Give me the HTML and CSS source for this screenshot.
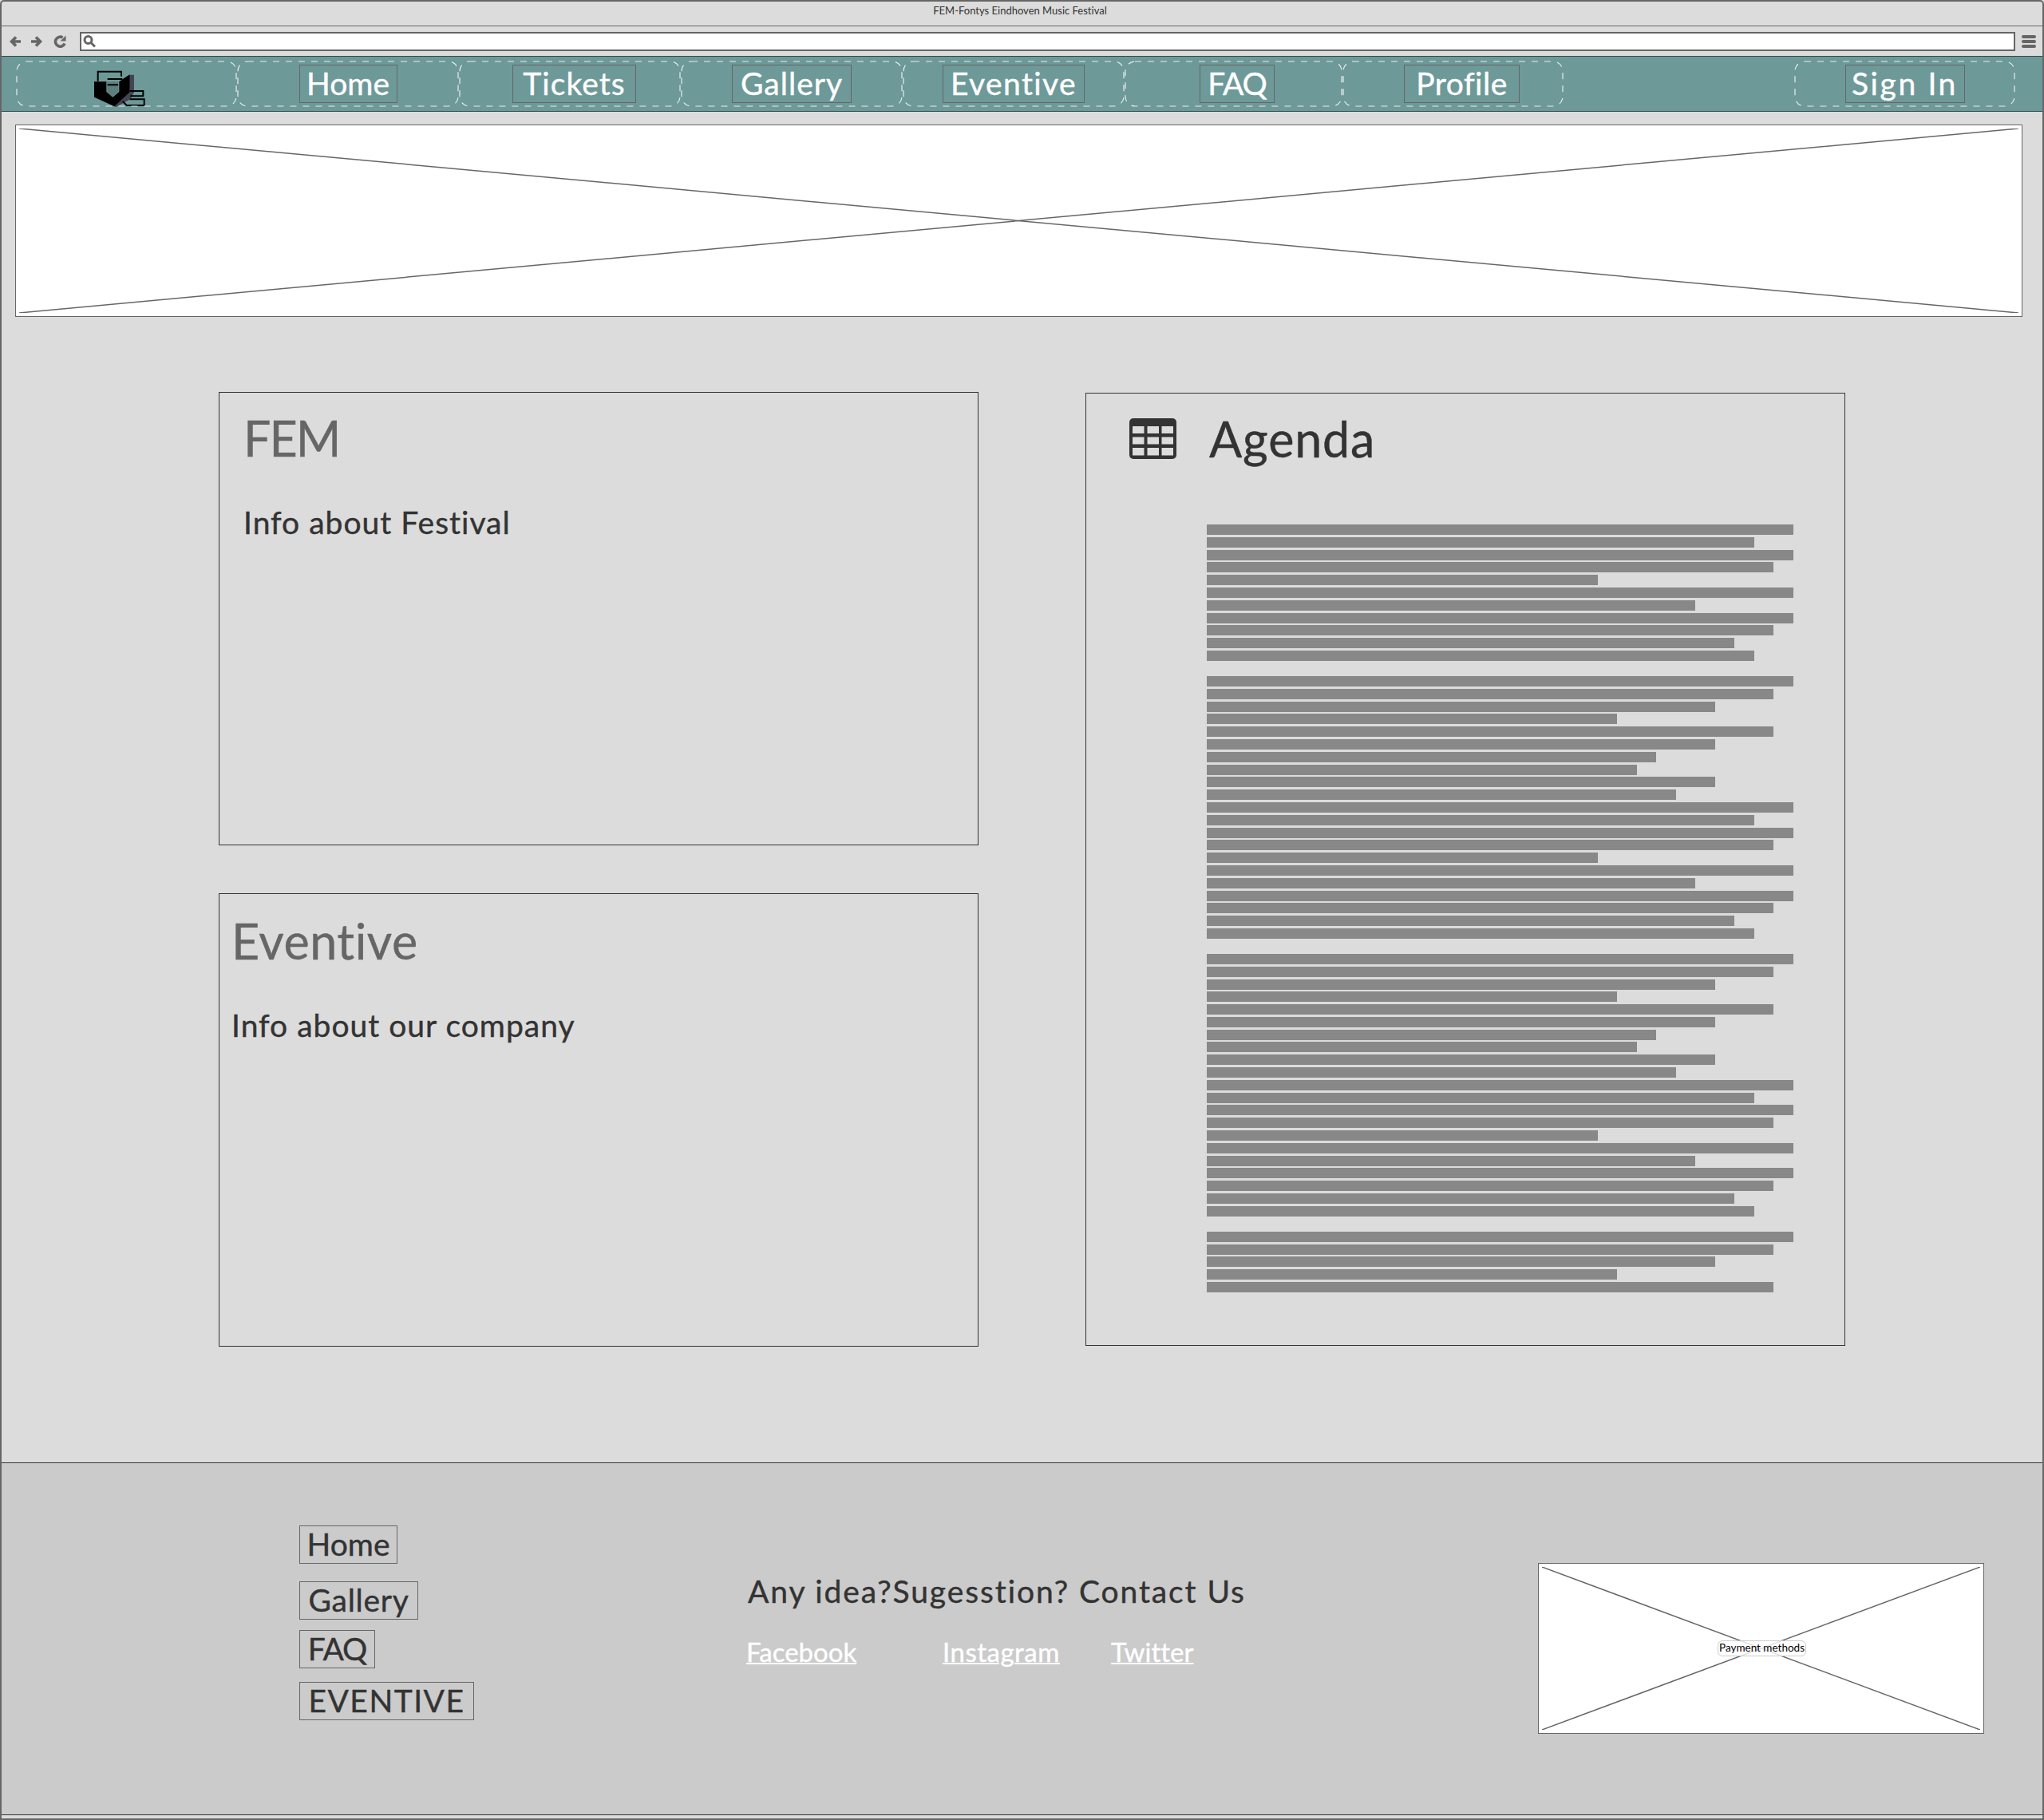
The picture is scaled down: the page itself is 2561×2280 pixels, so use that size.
FILE: index.html
```html
<!DOCTYPE html>
<html lang="en">
<head>
    <meta charset="UTF-8">
    <meta name="viewport" content="width=device-width, initial-scale=1.0">
    <title>FEM-Fontys Eindhoven Music Festival</title>
    <link rel="stylesheet" href="styles.css">
</head>
<body>

<div class="window">
    <div class="title-bar">FEM-Fontys Eindhoven Music Festival</div>

    <!-- Browser toolbar -->
    <div class="toolbar">
        <svg class="tool-icon tool-back" viewBox="0 0 16 16"><path d="M14 8H4M8 2.500 2.500 8 8 13.500"/></svg>
        <svg class="tool-icon tool-forward" viewBox="0 0 16 16"><path d="M2 8h10M8 2.500 13.500 8 8 13.500"/></svg>
        <svg class="tool-icon tool-reload" viewBox="0 0 16 16"><path d="M14 10.500A6 6 0 1 1 11.500 3"/><path class="reload-head" d="M8.500 7.500 15.500 0.500v7z"/></svg>
        <div class="address">
            <svg class="search-icon" viewBox="0 0 17 16"><circle cx="6.500" cy="6" r="4.500"/><path d="m10 9.500 5 5"/></svg>
        </div>
        <div class="hamburger"><span></span><span></span><span></span></div>
    </div>

    <!-- Main nav -->
    <nav class="main-nav">
        <div class="nav-group group-logo">
            <svg class="dash"><rect rx="12"/></svg>
            <svg class="logo" viewBox="0 0 360 240">
                <path class="logo-shadow" d="M188 86h16v66l-14 26-55 30-10-8 63-50z"/>
                <path class="logo-solid" d="M54 112h46v38l24 20 24-20V112l17-12 23-15v66l-58 54-76-35z"/>
                <path class="logo-inner" d="M103 112h42v38l-23 19-19-19z"/>
                <path class="logo-line" d="M68 110V74h88v18M104 102h56M104 124h40M188 147h50v19h-48M188 178h54v23h-66l-15-15"/>
            </svg>
        </div>
        <div class="nav-group group-home">
            <svg class="dash"><rect rx="12"/></svg>
            <a class="nav-btn btn-home">Home</a>
        </div>
        <div class="nav-group group-tickets">
            <svg class="dash"><rect rx="12"/></svg>
            <a class="nav-btn btn-tickets">Tickets</a>
        </div>
        <div class="nav-group group-gallery">
            <svg class="dash"><rect rx="12"/></svg>
            <a class="nav-btn btn-gallery">Gallery</a>
        </div>
        <div class="nav-group group-eventive">
            <svg class="dash"><rect rx="12"/></svg>
            <a class="nav-btn btn-eventive">Eventive</a>
        </div>
        <div class="nav-group group-faq">
            <svg class="dash"><rect rx="12"/></svg>
            <a class="nav-btn btn-faq">FAQ</a>
        </div>
        <div class="nav-group group-profile">
            <svg class="dash"><rect rx="12"/></svg>
            <a class="nav-btn btn-profile">Profile</a>
        </div>
        <div class="nav-group group-signin">
            <svg class="dash"><rect rx="12"/></svg>
            <a class="nav-btn btn-signin">Sign In</a>
        </div>
    </nav>

    <div class="placeholder banner">
        <svg class="cross" viewBox="0 0 100 100" preserveAspectRatio="none"><path d="M0 0 100 100M100 0 0 100"/></svg>
    </div>

    <main class="content">
        <div class="left-col">
            <section class="card card-fem">
                <h2>FEM</h2>
                <p>Info about Festival</p>
            </section>
            <section class="card card-eventive">
                <h2>Eventive</h2>
                <p>Info about our company</p>
            </section>
        </div>

        <section class="card agenda">
            <div class="agenda-head">
                <svg class="agenda-icon" viewBox="0 0 59 51">
                    <rect class="table-frame" width="59" height="51" rx="5"/>
                    <path class="table-cells" d="M4 10h14.500v9H4zM22.500 10H37v9H22.500zM40.500 10H55v9H40.500zM4 23.500h14.500v9H4zM22.500 23.500H37v9H22.500zM40.500 23.500H55v9H40.500zM4 37h14.500v9.500H4zM22.500 37H37v9.500H22.500zM40.500 37H55v9.500H40.500z"/>
                </svg>
                <h1>Agenda</h1>
            </div>
            <div class="agenda-text">
                <div class="para">
                    <i class="l450"></i><i class="l420"></i><i class="l450"></i><i class="l435"></i><i class="l300"></i><i class="l450"></i><i class="l375"></i><i class="l450"></i><i class="l435"></i><i class="l405"></i><i class="l420"></i>
                </div>
                <div class="para">
                    <i class="l450"></i><i class="l435"></i><i class="l390"></i><i class="l315"></i><i class="l435"></i><i class="l390"></i><i class="l345"></i><i class="l330"></i><i class="l390"></i><i class="l360"></i><i class="l450"></i><i class="l420"></i><i class="l450"></i><i class="l435"></i><i class="l300"></i><i class="l450"></i><i class="l375"></i><i class="l450"></i><i class="l435"></i><i class="l405"></i><i class="l420"></i>
                </div>
                <div class="para">
                    <i class="l450"></i><i class="l435"></i><i class="l390"></i><i class="l315"></i><i class="l435"></i><i class="l390"></i><i class="l345"></i><i class="l330"></i><i class="l390"></i><i class="l360"></i><i class="l450"></i><i class="l420"></i><i class="l450"></i><i class="l435"></i><i class="l300"></i><i class="l450"></i><i class="l375"></i><i class="l450"></i><i class="l435"></i><i class="l405"></i><i class="l420"></i>
                </div>
                <div class="para">
                    <i class="l450"></i><i class="l435"></i><i class="l390"></i><i class="l315"></i><i class="l435"></i>
                </div>
            </div>
        </section>
    </main>

    <footer class="site-footer">
        <div class="footer-nav">
            <a class="footer-btn fb-home">Home</a>
            <a class="footer-btn fb-gallery">Gallery</a>
            <a class="footer-btn fb-faq">FAQ</a>
            <a class="footer-btn fb-eventive">EVENTIVE</a>
        </div>
        <div class="contact">
            <h3>Any idea?Sugesstion? Contact Us</h3>
            <div class="social">
                <a class="link-facebook">Facebook</a>
                <a class="link-instagram">Instagram</a>
                <a class="link-twitter">Twitter</a>
            </div>
        </div>
        <div class="placeholder payment">
            <svg class="cross" viewBox="0 0 100 100" preserveAspectRatio="none"><path d="M0 0 100 100M100 0 0 100"/></svg>
            <span class="payment-label">Payment methods</span>
        </div>
    </footer>
    <div class="bottom-strip"></div>
</div>

</body>
</html>
```

FILE: styles.css
```css
body {
    margin: 0;
    background-color: #dcdcdc;
    font-family: "Lato", "Open Sans", sans-serif;
    font-variant-ligatures: none;
    -webkit-text-stroke: 0.4px;
    color: #333;
}
.window {
    box-sizing: border-box;
    width: 2561px;
    height: 2280px;
    border: 2px solid #666;
    border-radius: 5px 5px 0 0;
    display: flex;
    flex-direction: column;
    overflow: hidden;
}

/* Browser chrome */
.title-bar {
    flex: none;
    height: 30px;
    line-height: 22px;
    padding-right: 5px;
    border-bottom: 1px solid #666;
    text-align: center;
    font-size: 13px;
    -webkit-text-stroke: 0;
}
.toolbar {
    flex: none;
    height: 37px;
    padding-left: 10px;
    display: flex;
    align-items: center;
}
.tool-icon {
    width: 16px;
    height: 16px;
    flex: none;
    fill: none;
    stroke: #666;
    stroke-width: 3.600;
}
.tool-back { margin-right: 9px; }
.tool-forward { margin-right: 14px; }
.tool-reload { margin-right: 17px; }
.reload-head {
    fill: #666;
    stroke: none;
}
.address {
    box-sizing: border-box;
    width: 2425px;
    height: 24px;
    border: 2px solid #666;
    background-color: #fff;
    display: flex;
    align-items: center;
    padding-left: 2px;
}
.search-icon {
    width: 17px;
    height: 16px;
    fill: none;
    stroke: #666;
    stroke-width: 3;
}
.hamburger {
    margin-left: 8px;
    width: 18px;
    display: flex;
    flex-direction: column;
    gap: 2px;
}
.hamburger span {
    height: 4px;
    border-radius: 2px;
    background-color: #666;
}

/* Main nav */
.main-nav {
    flex: none;
    box-sizing: border-box;
    height: 70px;
    margin: 0 -2px;
    padding: 5px 34px 5px 18px;
    background-color: #6e9999;
    border: 1px solid #2f4a4a;
    border-width: 1px 2px;
    display: flex;
}
.nav-group {
    position: relative;
    box-sizing: border-box;
    width: 278px;
    display: flex;
    align-items: center;
    justify-content: center;
    flex: none;
}
.dash {
    position: absolute;
    left: 0;
    top: 0;
    width: 100%;
    height: 100%;
    fill: none;
    stroke: #e8eeee;
    stroke-width: 1.200;
    stroke-dasharray: 8 8;
}
.dash rect {
    x: 1px;
    y: 1px;
    width: calc(100% - 2px);
    height: calc(100% - 2px);
}
.group-logo { width: 277px; }
.group-logo .logo { margin-left: 3px; }
.group-tickets { padding-left: 11px; }
.group-faq { width: 273px; padding-left: 9px; }
.group-profile { width: 277px; padding-left: 22px; }
.group-signin { width: 277px; margin-left: auto; }
.logo {
    width: 120px;
    height: 80px;
    flex: none;
}
.logo-shadow { fill: #445; }
.logo-solid { fill: #000; }
.logo-inner { fill: #5f7f7f; }
.logo-line {
    fill: none;
    stroke: #000;
    stroke-width: 6;
}
.nav-btn {
    position: relative;
    box-sizing: border-box;
    height: 48px;
    line-height: 44px;
    border: 1px solid #666;
    text-align: center;
    color: #fff;
    font-size: 39px;
}
.btn-home { width: 123px; }
.btn-tickets { width: 155px; letter-spacing: 1.100px; }
.btn-gallery { width: 150px; letter-spacing: 1px; }
.btn-eventive { width: 178px; letter-spacing: 1.400px; }
.btn-faq { width: 94px; letter-spacing: -1px; }
.btn-profile { width: 145px; letter-spacing: 0.5px; }
.btn-signin { width: 150px; letter-spacing: 2.600px; }

/* Image placeholders */
.placeholder {
    position: relative;
    box-sizing: border-box;
    border: 1px solid #666;
    background-color: #fff;
}
.cross {
    position: absolute;
    left: 4px;
    top: 4px;
    width: calc(100% - 8px);
    height: calc(100% - 8px);
}
.cross path {
    fill: none;
    stroke: #666;
    stroke-width: 1.500;
    vector-effect: non-scaling-stroke;
}
.banner {
    flex: none;
    height: 241px;
    margin: 16px 25px 0 17px;
}

/* Content */
.content {
    flex: 1;
    padding: 94px 247px 0 272px;
    display: flex;
    justify-content: space-between;
    align-items: flex-start;
}
.left-col {
    width: 952px;
    display: flex;
    flex-direction: column;
    gap: 60px;
}
.card {
    box-sizing: border-box;
    width: 952px;
    height: 568px;
    border: 1px solid #333;
}
.card h2 {
    margin: 0;
    font-size: 61px;
    line-height: 72px;
    font-weight: normal;
    color: #666;
}
.card p {
    margin: 45px 0 0;
    font-size: 39px;
    line-height: 48px;
    letter-spacing: 1px;
}
.card-fem { padding: 21px 0 0 30px; }
.card-fem h2 { letter-spacing: -2px; }
.card-eventive { padding: 23px 0 0 15px; }
.card-eventive h2 { letter-spacing: 0.5px; }
.agenda {
    height: 1194px;
    margin-top: 1px;
}
.agenda-head {
    height: 164px;
    padding: 31px 0 0 54px;
    box-sizing: border-box;
    display: flex;
    gap: 41px;
}
.agenda-icon {
    width: 59px;
    height: 51px;
    flex: none;
}
.table-frame { fill: #333; }
.table-cells { fill: #dcdcdc; }
.agenda-head h1 {
    margin: -10px 0 0;
    font-size: 61px;
    line-height: 72px;
    font-weight: normal;
    letter-spacing: 0.8px;
}
.agenda-text {
    padding-left: 151px;
    display: flex;
    flex-direction: column;
    gap: 19px;
}
.para {
    display: flex;
    flex-direction: column;
    gap: 2.800px;
}
.para i {
    display: block;
    height: 13px;
    background-color: #888;
}
.l450 { width: 735px; }
.l435 { width: 710px; }
.l420 { width: 686px; }
.l405 { width: 661px; }
.l390 { width: 637px; }
.l375 { width: 612px; }
.l360 { width: 588px; }
.l345 { width: 563px; }
.l330 { width: 539px; }
.l315 { width: 514px; }
.l300 { width: 490px; }

/* Footer */
.site-footer {
    flex: none;
    box-sizing: border-box;
    height: 442px;
    padding: 78px 0 0 373px;
    background-color: #cbcbcb;
    border-top: 1px solid #333;
    border-bottom: 1px solid #333;
    display: flex;
    align-items: flex-start;
}
.footer-nav {
    width: 560px;
    display: flex;
    flex-direction: column;
    align-items: flex-start;
}
.footer-btn {
    box-sizing: border-box;
    height: 48px;
    line-height: 44px;
    border: 1px solid #666;
    text-align: center;
    font-size: 39px;
}
.fb-home { width: 123px; }
.fb-gallery { width: 149px; margin-top: 22px; letter-spacing: 0.7px; }
.fb-faq { width: 95px; margin-top: 13px; letter-spacing: -1px; }
.fb-eventive { width: 219px; margin-top: 17px; letter-spacing: 1.500px; }
.contact {
    width: 992px;
    padding-top: 58px;
}
.contact h3 {
    margin: 0 0 0 2px;
    font-size: 39px;
    line-height: 48px;
    font-weight: normal;
    letter-spacing: 1.900px;
}
.social {
    margin-top: 31px;
    display: flex;
    font-size: 33px;
    line-height: 42px;
    color: #fff;
    text-decoration: underline;
    text-decoration-thickness: 2px;
}
.link-facebook { width: 246px; }
.link-instagram { width: 211px; letter-spacing: 0.5px; }
.payment {
    width: 559px;
    height: 214px;
    margin-top: 47px;
}
.payment-label {
    position: absolute;
    left: 224px;
    top: 96px;
    box-sizing: border-box;
    width: 111px;
    height: 20px;
    border: 1px solid #ccc;
    border-radius: 6px;
    background-color: rgba(255, 255, 255, 0.8);
    text-align: center;
    font-size: 13.500px;
    line-height: 17px;
    color: #000;
    -webkit-text-stroke: 0;
}
.bottom-strip {
    flex: none;
    height: 4px;
}
```
